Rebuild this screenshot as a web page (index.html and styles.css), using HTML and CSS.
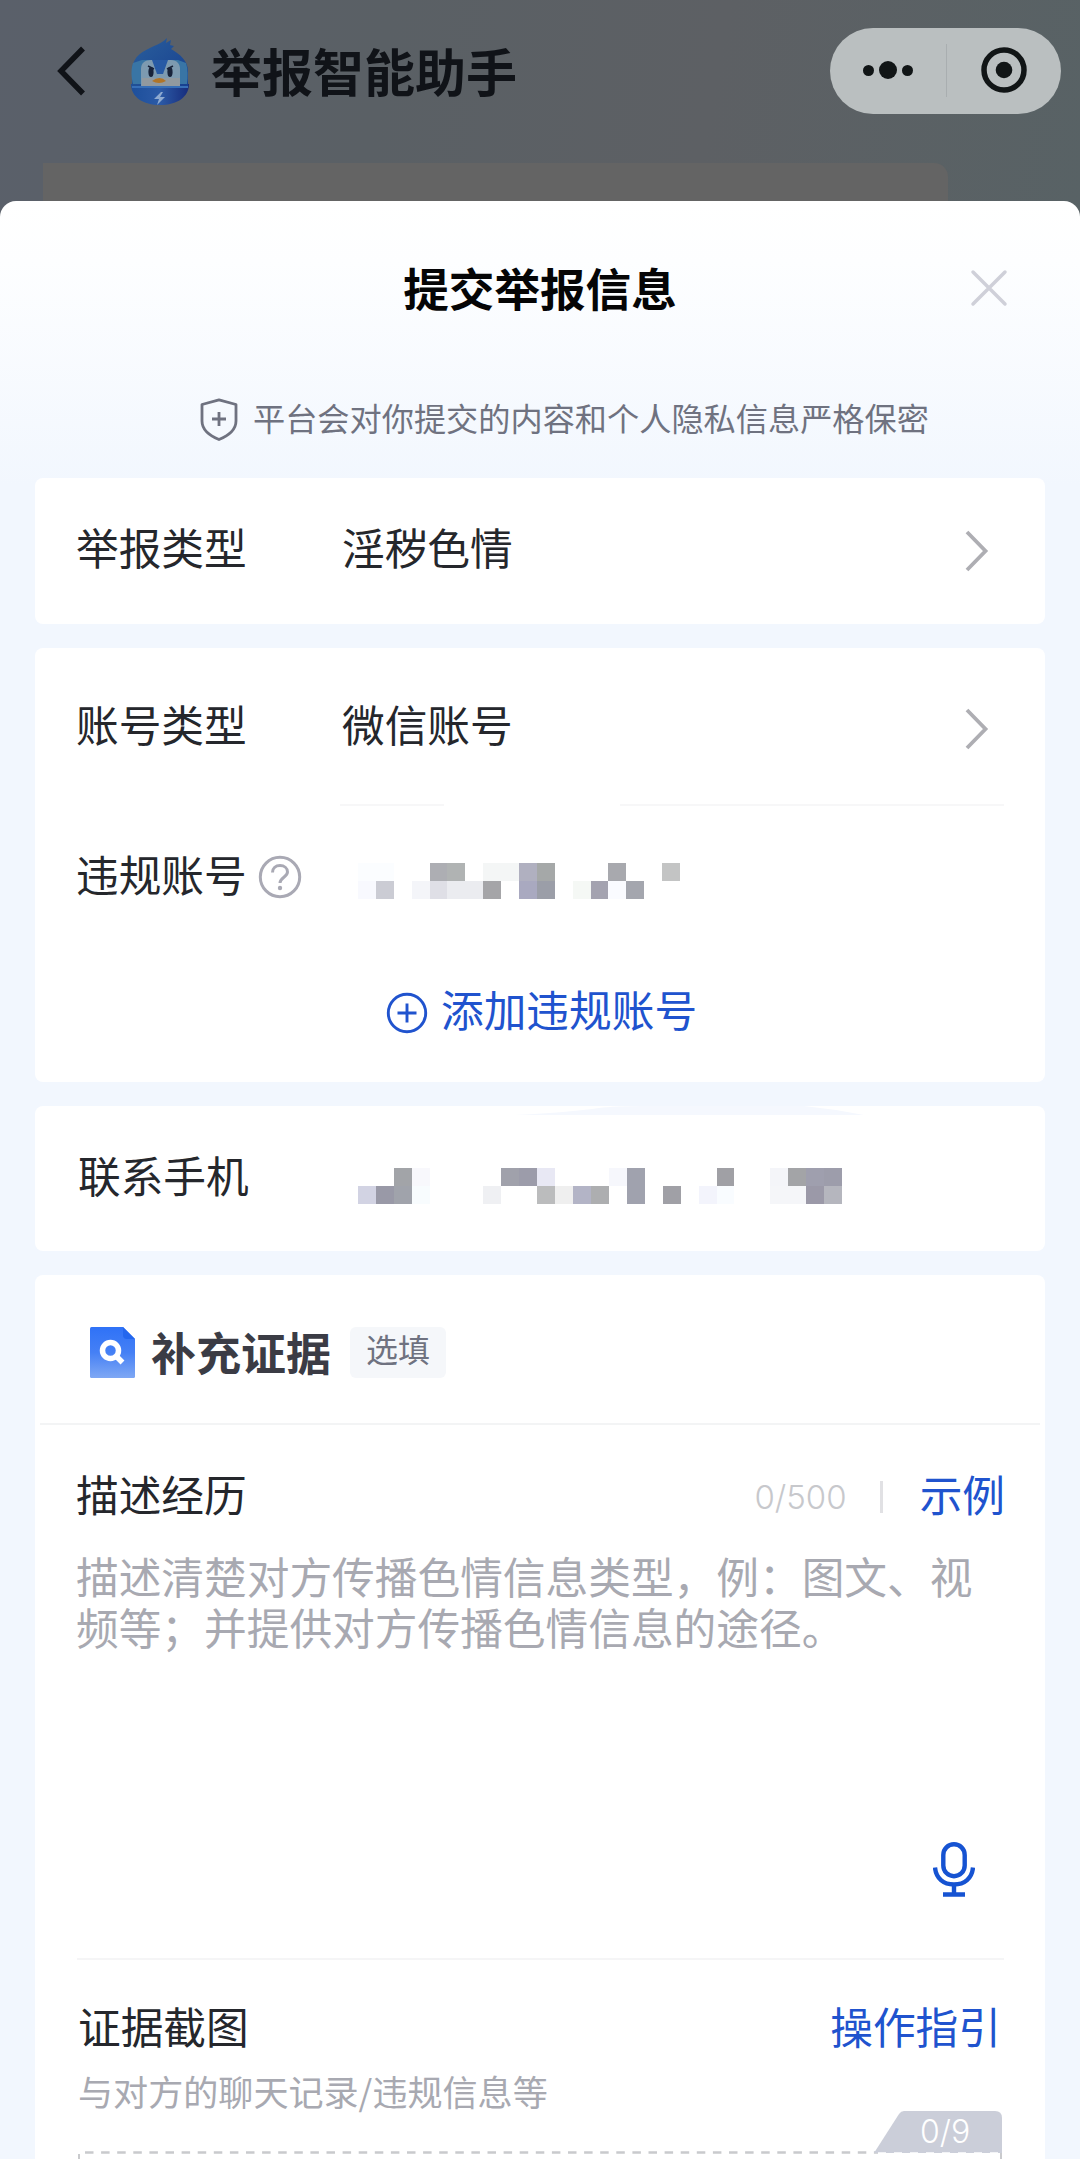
FILE: index.html
```html
<!DOCTYPE html>
<html lang="zh-CN">
<head>
<meta charset="utf-8">
<title>提交举报信息</title>
<link rel="stylesheet" href="styles.css">
</head>
<body>
<div class="page">
  <header class="topbar">
    <svg class="back" width="30" height="52" viewBox="0 0 30 52"><path d="M26 3.500L4 26l22 22.500" fill="none" stroke="#101318" stroke-width="5.500"/></svg>
    <svg class="avatar" width="60" height="68" viewBox="0 0 60 68">
      <defs>
        <linearGradient id="hood" x1="0" y1="0" x2="1" y2="1"><stop offset="0" stop-color="#2a5f9c"/><stop offset="1" stop-color="#173f8f"/></linearGradient>
        <linearGradient id="body" x1="0" y1="0" x2="1" y2="0"><stop offset="0" stop-color="#1d4f9b"/><stop offset=".5" stop-color="#2b5aa6"/><stop offset="1" stop-color="#172c7c"/></linearGradient>
      </defs>
      <path d="M1 46C1 59 13 67 30 67s29-8 29-21z" fill="url(#body)"/>
      <path d="M2 50V31C3 18 13 13 24 8c5-2 9-4 13-8l-1 5 5-3-1 5 4 1-3 3c9 5 17 12 17 22v17z" fill="url(#hood)"/>
      <path d="M3 25l9-3h36l8 3c2 6 2 14 1 21H3C1 39 1 31 3 25z" fill="#3975a5"/>
      <path d="M11 50V31c0-6 4-9 10-9h20c6 0 9 4 9 9v19z" fill="#7d9ab0"/>
      <path d="M22 22h16l-5 14h-6z" fill="#275aa5"/>
      <path d="M12 40h38v10H12z" fill="#91999f"/>
      <ellipse cx="21" cy="34" rx="2.600" ry="5" fill="#18233a"/><ellipse cx="40" cy="34" rx="2.600" ry="5" fill="#18233a"/>
      <path d="M18 28l6 3M43 28l-6 3" stroke="#18233a" stroke-width="1.600"/>
      <path d="M22 43q8-6 14 0-7 4-14 0z" fill="#b07528"/>
      <path d="M2 49h56" stroke="#376fb8" stroke-width="2"/>
      <path d="M31 54l-7 7h5l-2 6 8-8h-5l3-5z" fill="#8eaad0"/>
    </svg>
    <h1 class="app-name">举报智能助手</h1>
    <div class="capsule">
      <svg width="50" height="20" viewBox="0 0 50 20" fill="#111516"><circle cx="5.500" cy="10.500" r="5.500"/><circle cx="25" cy="10" r="9"/><circle cx="44.500" cy="10.500" r="5.500"/></svg>
      <span class="capsule-line"></span>
      <svg width="46" height="46" viewBox="0 0 46 46"><circle cx="23" cy="23" r="20" fill="none" stroke="#111516" stroke-width="5.500"/><circle cx="23" cy="23" r="8.300" fill="#111516"/></svg>
    </div>
  </header>
  <div class="bubble"></div>

  <main class="sheet">
    <div class="sheet-head">
      <h2 class="sheet-title">提交举报信息</h2>
      <svg class="close" width="38" height="38" viewBox="0 0 38 38"><path d="M3 3l32 32M35 3L3 35" stroke="#cfd0d9" stroke-width="3.500" stroke-linecap="round"/></svg>
    </div>
    <p class="privacy">
      <svg width="38" height="43" viewBox="0 0 38 43" fill="none" stroke="#6f7280" stroke-width="2.800"><path d="M19 1.800L36 6.500V23c0 9-7 14-17 18.500C9 37 2 32 2 23V6.500z" stroke-linejoin="round"/><path d="M19 14v14M12 21h14"/></svg>
      <span class="privacy-text">平台会对你提交的内容和个人隐私信息严格保密</span>
    </p>

    <section class="card">
      <div class="row row-type">
        <span class="label">举报类型</span><span class="value">淫秽色情</span>
        <svg class="chevron" width="24" height="42" viewBox="0 0 24 42"><path d="M2 2l18.500 19L2 40" fill="none" stroke="#aeaeb3" stroke-width="3.800"/></svg>
      </div>
    </section>

    <section class="card">
      <div class="row row-account">
        <span class="label">账号类型</span><span class="value">微信账号</span>
        <svg class="chevron" width="24" height="42" viewBox="0 0 24 42"><path d="M2 2l18.500 19L2 40" fill="none" stroke="#aeaeb3" stroke-width="3.800"/></svg>
      </div>
      <div class="split"><i class="split-a"></i><i class="split-b"></i></div>
      <div class="row row-offender">
        <span class="label">违规账号</span>
        <svg class="help" width="44" height="44" viewBox="0 0 44 44" fill="none" stroke="#a9a9b4" stroke-width="3"><circle cx="22" cy="22" r="19.700"/><path d="M14.500 17.500c0-4.500 3.300-7 7.500-7s7.500 2.600 7.500 6.500c0 5-7.500 5.500-7.500 11"/><circle cx="22" cy="33" r="2.200" fill="#a9a9b4" stroke="none"/></svg>
        <svg class="mosaic" width="322" height="36" viewBox="0 0 18 2" preserveAspectRatio="none" shape-rendering="crispEdges">
          <path fill="#fbfdff" d="M0 0h2v1H0z"/><path fill="#adaeb3" d="M4 0h1v1H4z"/><path fill="#b0b3b3" d="M5 0h1v1H5z"/><path fill="#f4f6f6" d="M7 0h2v1H7z"/><path fill="#b0b0c0" d="M9 0h1v1H9z"/><path fill="#a5a8a8" d="M10 0h1v1h-1z"/><path fill="#a8a9ae" d="M14 0h1v1h-1z"/><path fill="#c3c4c4" d="M17 0h1v1h-1z"/>
          <path fill="#f8f9fe" d="M0 1h1v1H0z"/><path fill="#cbccd4" d="M1 1h1v1H1z"/><path fill="#f4f5f9" d="M3 1h1v1H3z"/><path fill="#dfdfe6" d="M4 1h1v1H4z"/><path fill="#ebecf0" d="M5 1h2v1H5z"/><path fill="#a5a5a8" d="M7 1h1v1H7z"/><path fill="#a9a9c0" d="M9 1h1v1H9z"/><path fill="#9b9ea8" d="M10 1h1v1h-1z"/><path fill="#f5f8f5" d="M12 1h1v1h-1z"/><path fill="#a4a3b0" d="M13 1h1v1h-1z"/><path fill="#fafbff" d="M14 1h1v1h-1z"/><path fill="#a4a6ae" d="M15 1h1v1h-1z"/>
        </svg>
      </div>
      <div class="row row-add">
        <svg width="42" height="42" viewBox="0 0 42 42" fill="none" stroke="#2053ce" stroke-width="2.900"><circle cx="21" cy="21" r="18.700"/><path d="M21 11.500v19M11.500 21h19"/></svg>
        <span class="link">添加违规账号</span>
      </div>
    </section>

    <section class="card">
      <svg class="smear" width="350" height="9" viewBox="0 0 350 9"><path d="M0 9Q50 7 85 2 100 0 130 0h160q30 3 60 9z" fill="#f5f8fe"/></svg>
      <div class="row row-phone">
        <span class="label">联系手机</span>
        <svg class="mosaic" width="484" height="36" viewBox="0 0 27 2" preserveAspectRatio="none" shape-rendering="crispEdges">
          <path fill="#a2a4a8" d="M2 0h1v1H2z"/><path fill="#f8f8fc" d="M3 0h1v1H3z"/><path fill="#a0a1ab" d="M8 0h1v1H8z"/><path fill="#9c9caa" d="M9 0h1v1H9z"/><path fill="#e8e8f4" d="M10 0h1v1h-1z"/><path fill="#f6f7fc" d="M14 0h1v1h-1z"/><path fill="#a0a2ae" d="M15 0h1v2h-1z"/><path fill="#a0a0a5" d="M20 0h1v1h-1z"/><path fill="#f4f5f9" d="M23 0h1v1h-1z"/><path fill="#a3a4a7" d="M24 0h1v1h-1z"/><path fill="#9f9fae" d="M25 0h1v1h-1z"/><path fill="#9d9dab" d="M26 0h1v1h-1z"/>
          <path fill="#d2d3e3" d="M0 1h1v1H0z"/><path fill="#9999a7" d="M1 1h1v1H1z"/><path fill="#a0a3ab" d="M2 1h1v1H2z"/><path fill="#f8fcfe" d="M3 1h1v1H3z"/><path fill="#eff0f3" d="M7 1h1v1H7z"/><path fill="#bbbcbd" d="M10 1h1v1h-1z"/><path fill="#efefef" d="M11 1h1v1h-1z"/><path fill="#b3b4c6" d="M12 1h1v1h-1z"/><path fill="#adaeb0" d="M13 1h1v1h-1z"/><path fill="#a0a0a6" d="M17 1h1v1h-1z"/><path fill="#f3f4fc" d="M19 1h1v1h-1z"/><path fill="#f9fcff" d="M20 1h1v1h-1z"/><path fill="#f5f6f9" d="M23 1h2v1h-2z"/><path fill="#9b99a8" d="M25 1h1v1h-1z"/><path fill="#b5b6be" d="M26 1h1v1h-1z"/>
        </svg>
      </div>
    </section>

    <section class="card card-evidence">
      <div class="evidence-head">
        <svg width="45" height="51" viewBox="0 0 45 51">
          <defs><linearGradient id="doc" x1="0" y1="0" x2="0" y2="1"><stop offset="0" stop-color="#2f72f7"/><stop offset=".5" stop-color="#4580f5"/><stop offset="1" stop-color="#7fa8f4"/></linearGradient></defs>
          <path d="M1.500 0H33l12 12v37.500q0 1.500-1.500 1.500h-42Q0 51 0 49.500v-48Q0 0 1.500 0z" fill="url(#doc)"/>
          <path d="M33 0l12 12h-8q-4 0-4-4z" fill="#2467ee"/>
          <circle cx="20.500" cy="23.500" r="8" fill="none" stroke="#fff" stroke-width="5.500"/><path d="M26 29l6.500 6.500" stroke="#fff" stroke-width="5.500"/>
        </svg>
        <h3 class="evidence-title">补充证据</h3>
        <span class="tag">选填</span>
      </div>
      <div class="desc-head">
        <span class="label">描述经历</span>
        <span class="count">0/500</span><i class="bar"></i><span class="link">示例</span>
      </div>
      <div class="desc">
        <p class="placeholder">描述清楚对方传播色情信息类型，例：图文、视频等；并提供对方传播色情信息的途径。</p>
        <svg class="mic" width="42" height="55" viewBox="0 0 42 55" fill="none" stroke="#1653d2" stroke-width="4.400"><rect x="10.300" y="2.200" width="21.400" height="32" rx="10.700"/><path d="M2 25.500C3 36.500 10.500 42.500 21 42.500S39 36.500 40 25.500M21 42v10M10 52.500h22"/></svg>
      </div>
      <div class="shot-head"><span class="label">证据截图</span><span class="link">操作指引</span></div>
      <p class="shot-note">与对方的聊天记录/违规信息等</p>
      <div class="upload">
        <svg width="924" height="12" viewBox="0 0 924 12" fill="none" stroke="#c9cacd"><path d="M7 1.500h793" stroke-width="2.500" stroke-dasharray="8.500 7.600"/><path d="M1 3v9M923 0v12" stroke-width="2"/></svg>
        <div class="quota">
          <svg width="128" height="43" viewBox="0 0 128 43"><path d="M0 42L25 3q2-3 5-3h91q7 0 7 7v35z" fill="#cbced9"/><path d="M4 42h122" stroke="#fff" stroke-width="1.500" stroke-dasharray="8 8"/></svg>
          <span class="quota-text">0/9</span>
        </div>
      </div>
    </section>
  </main>
</div>
</body>
</html>
```
FILE: styles.css
```css
* { box-sizing: border-box; }
body { margin: 0; font-family: "Noto Sans CJK SC", "Noto Sans", sans-serif; color: #25272c; }
h1, h2, h3, p { margin: 0; }
svg { display: block; flex: none; }
.page {
  width: 1080px; height: 2159px; overflow: hidden; display: flex; flex-direction: column;
  background: linear-gradient(100deg, #5a606a 0, #5a6065 35%, #5d6064 65%, #586265 100%) 0 0 / 100% 230px no-repeat;
}

.topbar { height: 163px; flex: none; display: flex; align-items: flex-start; padding: 28px 19px 0 57px; }
.back { margin-top: 17px; }
.avatar { margin: 10px 0 0 43px; }
.app-name { margin: 5px 0 0 21px; font-size: 51px; line-height: 74px; font-weight: 700; color: #101318; white-space: nowrap; }
.capsule {
  width: 231px; height: 86px; margin-left: auto; padding: 0 34px 2px 33px; border-radius: 43px;
  background: #babfc0; display: flex; align-items: center;
}
.capsule-line { width: 1px; height: 53px; background: #a9aeb0; margin: 0 34px 0 33px; }
.bubble { width: 905px; height: 38px; flex: none; margin-left: 43px; border-radius: 0 14px 0 0; background: #646464; }

.sheet {
  flex: 1; min-height: 0; overflow: hidden; display: flex; flex-direction: column; gap: 24px;
  padding: 0 35px; border-radius: 16px 16px 0 0;
  background: linear-gradient(#fff 0, #fdfeff 60px, #f2f7fe 285px, #f2f7fe 100%);
}
.sheet-head { height: 175px; flex: none; display: flex; justify-content: flex-end; align-items: center; margin-bottom: -24px; padding-right: 37px; }
.sheet-title { flex: 1; padding-left: 75px; text-align: center; font-size: 45.600px; line-height: 66px; font-weight: 700; color: #050506; margin-top: -4px; }
.close { margin-top: -1px; }
.privacy { height: 78px; flex: none; display: flex; align-items: flex-start; gap: 15px; padding: 22px 0 0 165px; font-size: 32.200px; line-height: 40px; color: #6f7280; white-space: nowrap; }
.privacy-text { margin-top: -1px; }

.card { flex: none; position: relative; border-radius: 8px; background: #fff; }
.row { display: flex; align-items: center; padding: 0 56px 0 41px; }
.label, .value, .link { font-size: 42.700px; line-height: 60px; margin-top: -11px; white-space: nowrap; }
.label { width: 171px; }
.value { margin-left: 95px; }
.link { color: #2053ce; }
.chevron { margin-left: auto; }
.row-type { height: 146px; padding-top: 0; }
.row-account { height: 156px; padding-top: 5px; }
.split { display: flex; height: 2px; padding: 0 41px 0 305px; margin-bottom: -1px; justify-content: space-between; }
.split-a { width: 104px; background: #f7f7f8; }
.split-b { width: 384px; background: #f7f7f8; }
.row-offender { height: 146px; }
.help { margin: -2px 0 0 11px; }
.row-offender .mosaic { margin: 6px 0 0 56px; }
.row-add { height: 131px; padding: 0 0 7px 351px; gap: 13px; }
.smear { position: absolute; left: 479px; top: 0; }
.row-phone { height: 145px; padding: 3px 0 0 43px; }
.row-phone .label { margin-top: -12px; }
.row-phone .mosaic { margin: 11px 0 0 109px; }

.card-evidence { flex: 1 0 885px; }
.evidence-head { height: 150px; margin: 0 5px; padding: 7px 0 0 50px; display: flex; align-items: center; border-bottom: 2px solid #f3f4f5; }
.evidence-title { margin: -1px 0 0 16px; font-size: 45px; line-height: 60px; font-weight: 700; color: #3b3c45; }
.tag { margin-left: 19px; width: 96px; height: 51px; padding-left: 16px; border-radius: 6px; background: #f5f7fa; font-size: 32px; line-height: 42px; color: #6f7280; }
.desc-head { height: 125px; display: flex; align-items: center; padding: 22px 40px 0 41px; }
.count { margin: -4px 0 0 auto; font: 300 33px/40px "Inter", sans-serif; color: #c7c8cc; }
.bar { width: 3px; height: 32px; margin: -3px 37px 0 33px; background: #e1e1e4; }
.desc { height: 410px; margin: 0 41px 0 42px; padding-bottom: 61px; display: flex; flex-direction: column; justify-content: space-between; border-bottom: 2px solid #f5f5f6; }
.placeholder { margin-left: -1px; width: 905px; font-size: 42.700px; line-height: 51px; color: #a8a9b1; word-break: break-all; }
.mic { align-self: flex-end; margin-right: 29px; }
.shot-head { height: 106px; display: flex; align-items: center; justify-content: space-between; padding: 35px 44px 0 43px; }
.shot-note { padding-left: 43px; font-size: 35.100px; line-height: 50px; color: #a8a9b1; }
.upload { position: relative; margin: 35px 43px 0 43px; height: 20px; }
.quota { position: absolute; right: 0; top: -40px; width: 128px; height: 43px; }
.quota-text { position: absolute; left: 46px; top: 1px; font: 300 32px/40px "Inter", sans-serif; color: #fff; }
```
